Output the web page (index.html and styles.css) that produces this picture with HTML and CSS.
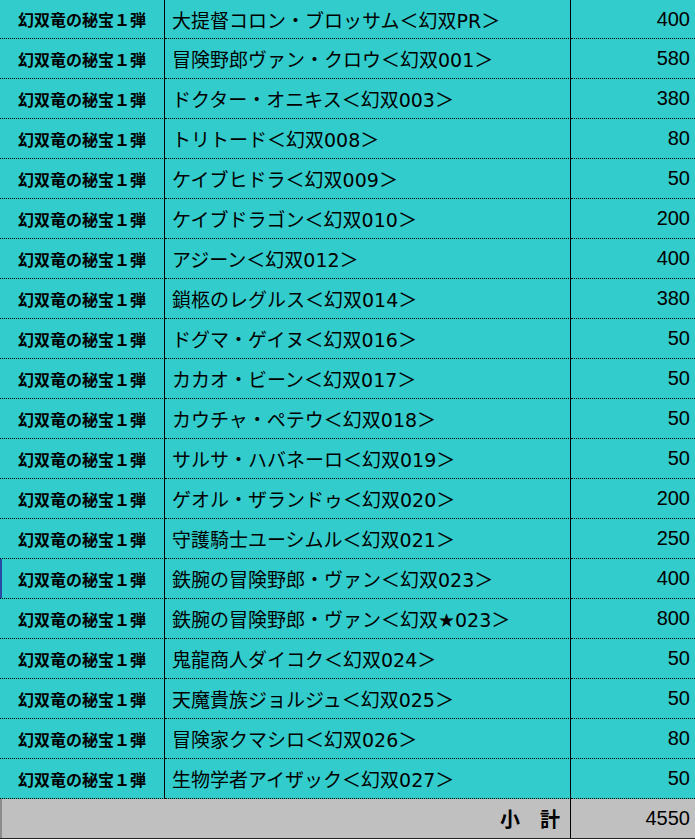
FILE: index.html
```html
<!DOCTYPE html>
<html lang="ja">
<head>
<meta charset="utf-8">
<link rel="stylesheet" href="styles.css">
</head>
<body>
<table class="list">
  <colgroup><col class="c1"><col class="c2"><col class="c3"></colgroup>
  <tbody>
    <tr><td class="set">幻双竜の秘宝１弾</td><td class="name">大提督コロン・ブロッサム＜幻双PR＞</td><td class="price">400</td></tr>
    <tr><td class="set">幻双竜の秘宝１弾</td><td class="name">冒険野郎ヴァン・クロウ＜幻双001＞</td><td class="price">580</td></tr>
    <tr><td class="set">幻双竜の秘宝１弾</td><td class="name">ドクター・オニキス＜幻双003＞</td><td class="price">380</td></tr>
    <tr><td class="set">幻双竜の秘宝１弾</td><td class="name">トリトード＜幻双008＞</td><td class="price">80</td></tr>
    <tr><td class="set">幻双竜の秘宝１弾</td><td class="name">ケイブヒドラ＜幻双009＞</td><td class="price">50</td></tr>
    <tr><td class="set">幻双竜の秘宝１弾</td><td class="name">ケイブドラゴン＜幻双010＞</td><td class="price">200</td></tr>
    <tr><td class="set">幻双竜の秘宝１弾</td><td class="name">アジーン＜幻双012＞</td><td class="price">400</td></tr>
    <tr><td class="set">幻双竜の秘宝１弾</td><td class="name">鎖柩のレグルス＜幻双014＞</td><td class="price">380</td></tr>
    <tr><td class="set">幻双竜の秘宝１弾</td><td class="name">ドグマ・ゲイヌ＜幻双016＞</td><td class="price">50</td></tr>
    <tr><td class="set">幻双竜の秘宝１弾</td><td class="name">カカオ・ビーン＜幻双017＞</td><td class="price">50</td></tr>
    <tr><td class="set">幻双竜の秘宝１弾</td><td class="name">カウチャ・ペテウ＜幻双018＞</td><td class="price">50</td></tr>
    <tr><td class="set">幻双竜の秘宝１弾</td><td class="name">サルサ・ハバネーロ＜幻双019＞</td><td class="price">50</td></tr>
    <tr><td class="set">幻双竜の秘宝１弾</td><td class="name">ゲオル・ザランドゥ＜幻双020＞</td><td class="price">200</td></tr>
    <tr><td class="set">幻双竜の秘宝１弾</td><td class="name">守護騎士ユーシムル＜幻双021＞</td><td class="price">250</td></tr>
    <tr><td class="set set-mark">幻双竜の秘宝１弾</td><td class="name">鉄腕の冒険野郎・ヴァン＜幻双023＞</td><td class="price">400</td></tr>
    <tr><td class="set">幻双竜の秘宝１弾</td><td class="name">鉄腕の冒険野郎・ヴァン＜幻双★023＞</td><td class="price">800</td></tr>
    <tr><td class="set">幻双竜の秘宝１弾</td><td class="name">鬼龍商人ダイコク＜幻双024＞</td><td class="price">50</td></tr>
    <tr><td class="set">幻双竜の秘宝１弾</td><td class="name">天魔貴族ジョルジュ＜幻双025＞</td><td class="price">50</td></tr>
    <tr><td class="set">幻双竜の秘宝１弾</td><td class="name">冒険家クマシロ＜幻双026＞</td><td class="price">80</td></tr>
    <tr><td class="set">幻双竜の秘宝１弾</td><td class="name">生物学者アイザック＜幻双027＞</td><td class="price">50</td></tr>
    <tr class="total"><td class="total-label" colspan="2">小　計</td><td class="price">4550</td></tr>
  </tbody>
</table>
</body>
</html>
```

FILE: styles.css
```css
html, body {
  margin: 0;
  padding: 0;
  background: #33cccc;
}

.list {
  width: 695px;
  table-layout: fixed;
  border-collapse: separate;
  border-spacing: 0;
  background: #33cccc;
}

.c1 { width: 165px; }
.c2 { width: 406px; }
.c3 { width: 124px; }

.list td {
  height: 40px;
  padding: 0;
  box-sizing: border-box;
  border-bottom: 1px dotted #000;
  vertical-align: middle;
  white-space: nowrap;
  overflow: hidden;
  color: #000;
}

.list tr:first-child td {
  height: 39px;
}

.set {
  border-right: 1px solid #000;
  text-align: center;
  font-family: "Noto Sans CJK JP", sans-serif;
  font-weight: bold;
  font-size: 16px;
  color: #0a0a0a;
}

.set-mark {
  box-shadow: inset 2px 0 0 #2a4aa8;
}

.name {
  border-right: 1px solid #000;
  padding-left: 7px !important;
  font-family: "DejaVu Sans", "Noto Sans CJK JP", sans-serif;
  font-size: 19px;
  color: #10201f;
}

.price {
  text-align: right;
  padding-right: 5px !important;
  font-family: "Liberation Sans", Arial, sans-serif;
  font-size: 20px;
  color: #0a1414;
}

.total td {
  background: #c0c0c0;
  border-bottom: 1px solid #222;
  height: 40px;
}

.total-label {
  border-right: 1px solid #000;
  text-align: right;
  padding-right: 10px !important;
  font-family: "Noto Sans CJK JP", sans-serif;
  font-weight: bold;
  font-size: 20px;
  box-shadow: inset 2px 0 0 #8c8c8c;
}
```
